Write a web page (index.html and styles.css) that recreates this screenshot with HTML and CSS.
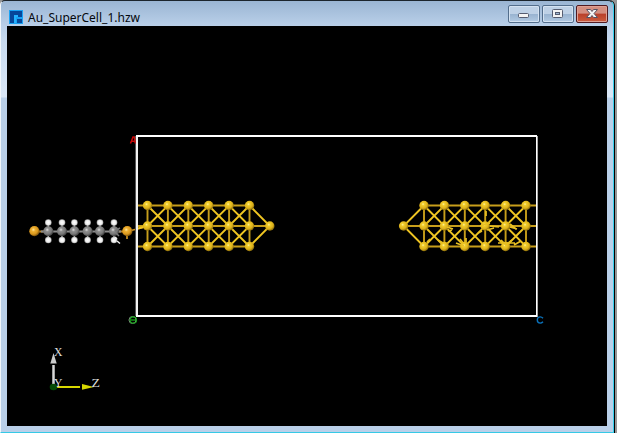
FILE: index.html
```html
<!DOCTYPE html>
<html lang="en">
<head>
<meta charset="utf-8">
<title>Au_SuperCell_1.hzw</title>
<link rel="stylesheet" href="styles.css">
</head>
<body>
<div class="window">
  <header class="titlebar">
    <svg class="app-icon" width="14" height="14" viewBox="0 0 14 14" shape-rendering="crispEdges">
      <rect width="14" height="14" fill="#18a2f4"/>
      <path d="M1 1h12v4H9v2H5v6H1zM8 9h5v4H8z" fill="#06479a"/>
      <path d="M5 5h4v2H7v6H5z" fill="#22b2ff"/>
      <path d="M9 5h4v2H9z" fill="#06479a"/>
    </svg>
    <h1 class="title">Au_SuperCell_1.hzw</h1>
    <div class="controls">
      <button class="control" aria-label="Minimize"><svg width="30" height="16"><rect x="9.5" y="7.5" width="10" height="4" rx="1" fill="#f4f4f4" stroke="#565d70"/></svg></button>
      <button class="control" aria-label="Maximize"><svg width="30" height="16"><rect x="9.5" y="3.5" width="10" height="8" rx="1" fill="#f4f4f4" stroke="#565d70"/><rect x="12.5" y="6.5" width="4" height="2" fill="#9fb6d2" stroke="#565d70"/></svg></button>
      <button class="control close" aria-label="Close"><svg width="30" height="16"><path d="M9.5 3.5h4l1.5 2 1.5-2h4L17 7.5l3.5 4h-4l-1.5-2-1.5 2h-4l3.5-4z" fill="#f4f4f4" stroke="#565263"/></svg></button>
    </div>
  </header>
  <main class="viewport">
    <svg class="scene" width="600" height="400" viewBox="7 26 600 400">
      <defs>
        <radialGradient id="gold" cx=".4" cy=".36" r=".62">
          <stop offset="0" stop-color="#fff2a0"/><stop offset=".25" stop-color="#f1cd2b"/><stop offset=".7" stop-color="#dcb01a"/><stop offset="1" stop-color="#92730c"/>
        </radialGradient>
        <radialGradient id="sulfur" cx=".4" cy=".36" r=".62">
          <stop offset="0" stop-color="#ffe6a0"/><stop offset=".3" stop-color="#eeb031"/><stop offset=".7" stop-color="#d8961d"/><stop offset="1" stop-color="#80560d"/>
        </radialGradient>
        <radialGradient id="carbon" cx=".4" cy=".36" r=".62">
          <stop offset="0" stop-color="#dedede"/><stop offset=".3" stop-color="#8e8e8e"/><stop offset=".7" stop-color="#777"/><stop offset="1" stop-color="#444"/>
        </radialGradient>
        <radialGradient id="hydrogen">
          <stop offset="0" stop-color="#fff"/><stop offset=".65" stop-color="#ececec"/><stop offset="1" stop-color="#999"/>
        </radialGradient>
        <circle id="au" r="4.7" fill="url(#gold)"/>
        <circle id="s" r="5.1" fill="url(#sulfur)"/>
        <g id="ch2">
          <path d="M0-8V9" stroke="#bbb" stroke-width="1.5"/>
          <circle r="5" fill="url(#carbon)"/>
          <circle cy="-8.7" r="3.3" fill="url(#hydrogen)"/><circle cy="8.8" r="3.3" fill="url(#hydrogen)"/>
        </g>
        <g id="column"><use href="#au" y="-20.5"/><use href="#au"/><use href="#au" y="20.5"/></g>
        <g id="lattice">
          <path class="bond" d="M0-20.5H102M0 0H102M0 20.5H102M0-20.5V20.5M20.4-20.5V20.5M40.8-20.5V20.5M61.2-20.5V20.5M81.6-20.5V20.5M102-20.5V20.5"/>
          <path class="diagonal" d="M0 0L20.4-20.5 61.2 20.5 102-20.5M0 0L20.4 20.5 61.2-20.5 102 20.5M0-20.5L40.8 20.5 81.6-20.5 102 0M0 20.5L40.8-20.5 81.6 20.5 102 0"/>
          <use href="#column"/><use href="#column" x="20.4"/><use href="#column" x="40.8"/><use href="#column" x="61.2"/><use href="#column" x="81.6"/><use href="#column" x="102"/>
        </g>
      </defs>

      <!-- alkane chain between two sulfur atoms -->
      <path d="M34 231.5H48M114 231.5H127" stroke="#b9852a" stroke-width="2"/>
      <path d="M41 231.5H121" stroke="#8b8b8b" stroke-width="2"/>
      <use href="#ch2" x="48.3" y="231.2"/><use href="#ch2" x="62" y="231.2"/><use href="#ch2" x="74.4" y="231.2"/><use href="#ch2" x="87.6" y="231.2"/><use href="#ch2" x="100" y="231.2"/><use href="#ch2" x="114" y="231.2"/>
      <path d="M115 231l5-3M116 233l3 3" stroke="#777" stroke-width="1.5"/>
      <path d="M115 237l2 2M117 241l3 2.5" stroke="#eee" stroke-width="1.5"/>
      <path d="M127 232v7M127 231.5l20-5" stroke="#cf9424" stroke-width="1.7"/>
      <use href="#s" x="34.4" y="231.2"/><use href="#s" x="127.3" y="231.2"/>

      <!-- left electrode -->
      <path class="bond" d="M138 205.5h9M138 226h9M138 246.5h9M249.5 226h20"/>
      <path class="diagonal" d="M138 228.5l9-2.5M249.5 205.5L269.8 226l-20.3 20.5"/>
      <use href="#lattice" x="147.5" y="226"/><use href="#au" x="269.8" y="226"/>

      <!-- right electrode -->
      <path class="bond" d="M526 205.5h10M526 226h10M526 246.5h10M403.6 226h20.4"/>
      <path class="diagonal" d="M424 205.5L403.6 226l20.4 20.5"/>
      <use href="#lattice" x="424" y="226"/><use href="#au" x="403.6" y="226"/>
      <path class="spur" d="M427 242l3-3M438 240l5 3M447 227l6 2M448 231l4-1M456 243l8 3M460 239l4 5M466 238v4M480 226l10-3M490 226l9 1M486 211v5M482 231l-4 2M487 230l7-2M501 240l5 5 6-5M498 243h17M510 227l7 2M510 224l6 5M521 241l-7 4"/>

      <!-- unit cell -->
      <g shape-rendering="crispEdges">
        <rect x="136" y="135" width="2" height="181" fill="#f2f2f2"/><rect x="536" y="135" width="1" height="181" fill="#fff"/>
        <rect x="135" y="136" width="1" height="180" fill="#555"/><rect x="537" y="136" width="1" height="181" fill="#aaa"/>
        <path d="M136 136h401M136 316h401" stroke="#fff" stroke-width="2"/>
      </g>
      <path d="M130.5 143.5l2.5-6.5h1.3l1 6.5M131 141.2h4.5" fill="none" stroke="#c80808" stroke-width="1.5"/>
      <circle cx="132.5" cy="320" r="3.5" fill="none" stroke="#858b85" stroke-width="1"/>
      <circle cx="133.3" cy="320" r="3.2" fill="none" stroke="#18a81b" stroke-width="1.2"/>
      <path d="M131 320h4.5" stroke="#1cc41e" stroke-width="1.1"/>
      <path d="M543 318.2q-1.2-1.3-2.8-1.3-2.9 0-2.9 3.1t2.9 3.1q1.6 0 2.8-1.3" fill="none" stroke="#0a72bb" stroke-width="1.4"/>

      <!-- axis triad -->
      <path d="M53.5 365v21" stroke="#d8d8d8" stroke-width="2.5"/>
      <path d="M53.5 353l3.2 10.5h-6.4z" fill="#ccc"/>
      <path d="M54 387h26" stroke="#d8d800" stroke-width="2"/>
      <path d="M82 384l12 3-12 2.7z" fill="#d8d800"/>
      <ellipse cx="53.5" cy="387" rx="3.8" ry="3.2" fill="#064b06"/>
      <text class="axis" x="54" y="356" textLength="8.5" lengthAdjust="spacingAndGlyphs">X</text>
      <text class="axis" x="54" y="387" textLength="8.5" lengthAdjust="spacingAndGlyphs">Y</text>
      <text class="axis" x="91.5" y="387" textLength="8.5" lengthAdjust="spacingAndGlyphs">Z</text>
    </svg>
  </main>
</div>
</body>
</html>
```
FILE: styles.css
```css
* { box-sizing: border-box; }
body { margin: 0; width: 617px; height: 433px; overflow: hidden; background: #969696; }
.window {
  width: 614px;
  height: 433px;
  padding: 0 6px 6px;
  border: 1px solid;
  border-color: #1b242c #35d0ee #35c9e6 #f2f7fb;
  border-radius: 5px 6px 0 0;
  box-shadow: 1px 0 #000;
  background: linear-gradient(#9ab5d3, #bad0e9 25px, #c8daef 40px, #dbe8f7 96px, #bad0e9 97px);
}
.titlebar { height: 25px; display: flex; align-items: flex-start; padding: 0 0 0 2px; }
.app-icon { margin-top: 9px; flex: none; }
.title {
  flex: 1;
  margin: 9px 0 0 5px;
  color: #05080c;
  font: 400 12px/16px "Noto Sans", sans-serif;
  letter-spacing: 0;
  white-space: nowrap;
}
.controls { display: flex; gap: 2px; margin: 4px -1px 0 0; }
.control {
  width: 32px;
  height: 18px;
  padding: 0;
  border: 1px solid #536e8c;
  border-radius: 2px;
  box-shadow: inset 0 0 0 1px #d4e2f1;
  background: linear-gradient(#bed1e6 48%, #98b3d0 50%, #b2cae3);
}
.control svg { display: block; }
.close { border-color: #501a21; box-shadow: inset 0 0 0 1px #dfa093; background: linear-gradient(#d48e80 45%, #b93f29 50%, #cc5c3e); }
.viewport { width: 600px; height: 400px; background: #000; }
.scene { display: block; }
.bond { fill: none; stroke: #c79e1b; stroke-width: 1.9; }
.diagonal { fill: none; stroke: #efc522; stroke-width: 1.9; }
.spur { fill: none; stroke: #e8bf22; stroke-width: 1.7; }
.axis { fill: #ddd; font: 12.5px "Liberation Serif", serif; }
```
